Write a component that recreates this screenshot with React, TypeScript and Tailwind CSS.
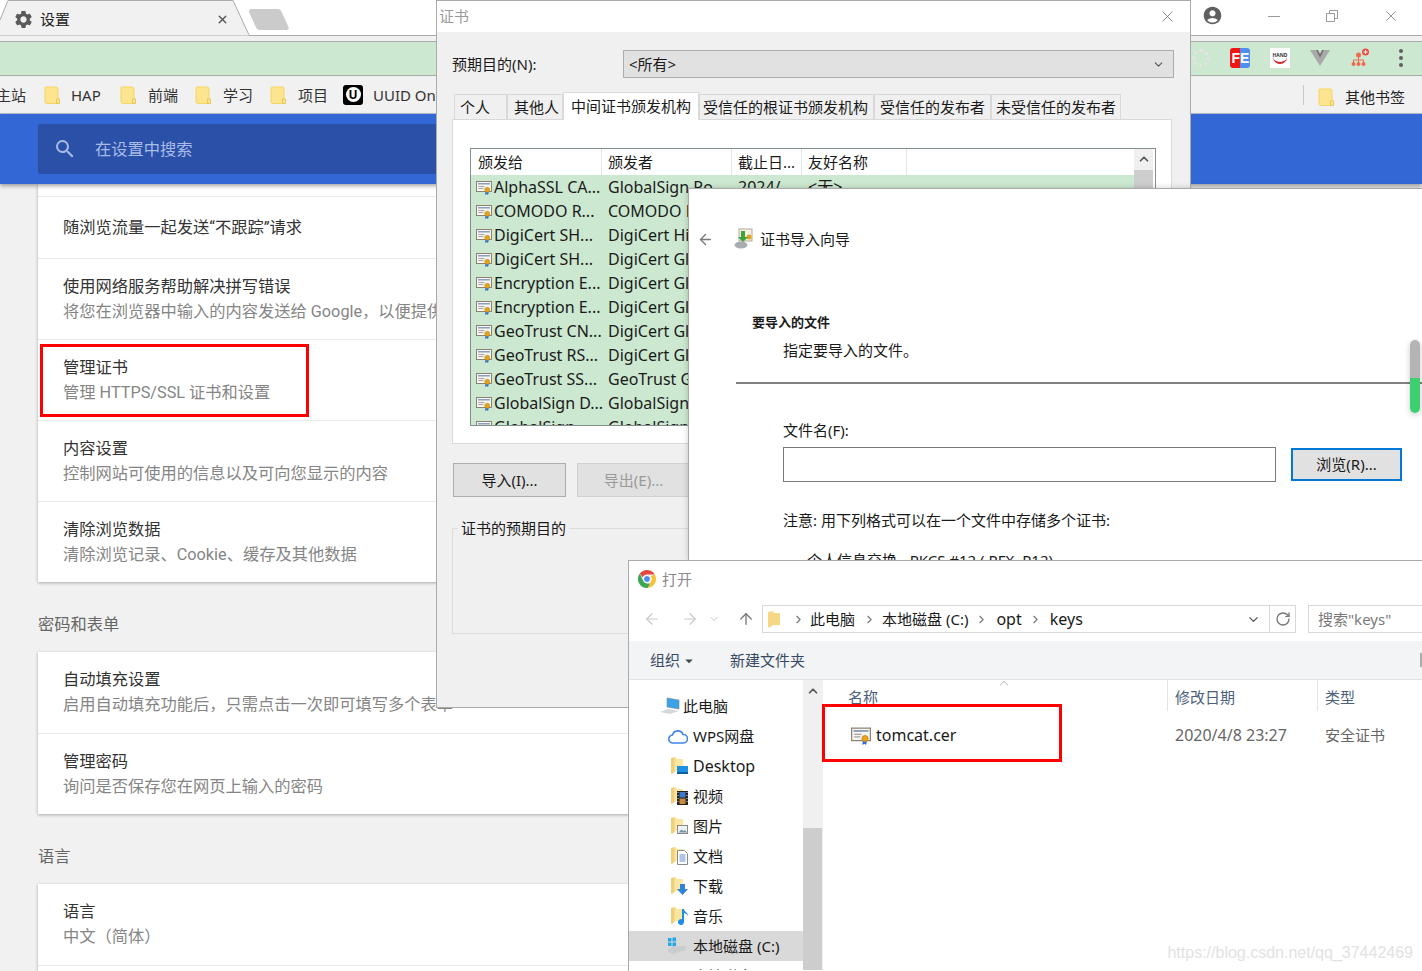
import React from "react";
import { MdSettings, MdSearch, MdAccountCircle, MdArrowDropDown } from "react-icons/md";
import { ArrowLeft, ArrowRight, ArrowUp, ChevronDown, ChevronRight, ChevronUp, RotateCw, X } from "lucide-react";

const Folder = ({ className = "" }: { className?: string }) => (
  <svg width="16" height="18" viewBox="0 0 16 18" className={className}>
    <path d="M1.500 1h11l1.500 1v13h1v2.500H2.500L1 16.500V1.500z" fill="#fde58f" stroke="#f4d565" strokeWidth="1" />
    <rect x="12.500" y="13" width="3" height="4.500" fill="#fde58f" stroke="#e7c14f" strokeWidth="0.800" />
  </svg>
);

const Cert = ({ size = 16 }: { size?: number }) => (
  <svg width={size} height={size} viewBox="0 0 16 16" className="shrink-0">
    <rect x="0.500" y="2.500" width="15" height="10" fill="#f7f5f0" stroke="#8d8375" />
    <rect x="2" y="4" width="12" height="1.500" fill="#8ca0c0" />
    <rect x="2.500" y="7" width="6" height="1" fill="#a4a4a4" />
    <rect x="2.500" y="9" width="5" height="1" fill="#a4a4a4" />
    <path d="M9.500 12l-.5 4 1.800-1 1.200 1 1-4z" fill="#2f6fd0" />
    <circle cx="11.200" cy="10.800" r="2.500" fill="#e5a21f" stroke="#b97e10" strokeWidth="0.500" />
  </svg>
);

const Chrome = () => (
  <svg width="18" height="18" viewBox="0 0 18 18">
    <path d="M9 0a9 9 0 0 1 7.800 4.500H9a4.500 4.500 0 0 0-4.300 3L1.900 3.500A9 9 0 0 1 9 0z" fill="#e2483c" />
    <path d="M16.800 4.500A9 9 0 0 1 9.600 18l3.300-6.700A4.500 4.500 0 0 0 12.400 6z" fill="#f6c338" />
    <path d="M9.600 18A9 9 0 0 1 1.900 3.500l3.300 7.300A4.500 4.500 0 0 0 9 13.500h3z" fill="#3ea655" />
    <circle cx="9" cy="9" r="3.500" fill="#4a8cf0" stroke="#fff" strokeWidth="1" />
  </svg>
);

const NavFolder = ({ badge }: { badge?: React.ReactNode }) => (
  <span className="relative inline-block w-[17px] h-[18px] shrink-0">
    <svg width="12" height="17" viewBox="0 0 12 17" className="block">
      <path d="M0 1l5-1 1 2h6v12H5l-4 3-1-1z" fill="#fbe6a2" />
      <path d="M0 1l3.500-.7v14.200l-2.500 2.500-1-1z" fill="#f1cf79" />
    </svg>
    {badge}
  </span>
);

const SettingRow = ({ title, sub, first }: { title: string; sub?: string; first?: boolean }) => (
  <div className={`px-[25px] flex flex-col justify-center ${first ? "" : "border-t border-[#e9e9e9]"} ${first && sub ? "pb-[2px]" : ""} ${sub ? "h-[81px]" : "h-[61px]"}`}>
    <div className="text-[16.250px] leading-[25px] text-[#333] whitespace-nowrap">{title}</div>
    {sub && <div className="text-[16.250px] leading-[25px] text-[#858585] whitespace-nowrap">{sub}</div>}
  </div>
);

const Card = ({ children, className = "" }: { children: React.ReactNode; className?: string }) => (
  <div className={`w-[900px] bg-white shadow-[0_1px_3px_rgba(0,0,0,0.3)] ${className}`}>{children}</div>
);

const SectionLabel = ({ children }: { children: React.ReactNode }) => (
  <div className="h-[70px] flex items-end pb-[17px] text-[16.250px] leading-[20px] text-[#666]">{children}</div>
);

const Bookmark = ({ label, width, gap }: { label: string; width: string; gap: string }) => (
  <div className={`flex items-center shrink-0 ${width}`}>
    <Folder className={gap} />
    <span className="text-[15px] mt-[2px] text-[#333] whitespace-nowrap">{label}</span>
  </div>
);

const certRows = [
  ["AlphaSSL CA...", "GlobalSign Ro"],
  ["COMODO R...", "COMODO RSA"],
  ["DigiCert SH...", "DigiCert Hi"],
  ["DigiCert SH...", "DigiCert Gl"],
  ["Encryption E...", "DigiCert Gl"],
  ["Encryption E...", "DigiCert Gl"],
  ["GeoTrust CN...", "DigiCert Gl"],
  ["GeoTrust RS...", "DigiCert Gl"],
  ["GeoTrust SS...", "GeoTrust G"],
  ["GlobalSign D...", "GlobalSign"],
  ["GlobalSign...", "GlobalSign"],
];

const tabs: [string, string][] = [
  ["个人", "w-[53px] pl-[5px]"],
  ["其他人", "w-[56px] pl-[6px]"],
];
const tabsAfter: [string, string][] = [
  ["受信任的根证书颁发机构", "w-[175px] pr-[2px]"],
  ["受信任的发布者", "w-[117px]"],
  ["未受信任的发布者", "w-[130px]"],
];

const sideItems: { label: string; icon: React.ReactNode; size: string }[] = [
  { label: "Desktop", size: "text-[16px]", icon: <NavFolder badge={<span className="absolute right-0 bottom-[1px] w-[11px] h-[8px] bg-[#1e90e0] border-b-2 border-[#0f5f9f]" />} /> },
  {
    label: "视频",
    size: "text-[15px]",
    icon: (
      <NavFolder
        badge={
          <svg width="11" height="14" viewBox="0 0 11 14" className="absolute right-0 bottom-0">
            <rect width="11" height="14" fill="#222" />
            <rect x="2.500" y="1" width="6" height="5.500" fill="#3f78c9" />
            <rect x="2.500" y="7.500" width="6" height="5.500" fill="#c98a3f" />
            <path d="M1 1v1M1 4v1M1 7v1M1 10v1M10 1v1M10 4v1M10 7v1M10 10v1" stroke="#ddd" />
          </svg>
        }
      />
    ),
  },
  {
    label: "图片",
    size: "text-[15px]",
    icon: (
      <NavFolder
        badge={
          <svg width="11" height="9" viewBox="0 0 11 9" className="absolute right-0 bottom-[1px]">
            <rect x=".5" y=".5" width="10" height="8" fill="#eef3f7" stroke="#8a8a8a" />
            <path d="M1.500 7.500l3-3 2 1.500 1.500-1 2 2.500z" fill="#6f95a8" />
          </svg>
        }
      />
    ),
  },
  {
    label: "文档",
    size: "text-[15px]",
    icon: (
      <NavFolder
        badge={
          <svg width="11" height="15" viewBox="0 0 11 15" className="absolute right-0 bottom-0">
            <path d="M.5.5h7l3 3v11H.5z" fill="#fff" stroke="#8a8a8a" />
            <path d="M2.500 5h6M2.500 7h6M2.500 9h6M2.500 11h6" stroke="#5a8fc8" />
          </svg>
        }
      />
    ),
  },
  { label: "下载", size: "text-[15px]", icon: <NavFolder badge={<svg width="11" height="11" viewBox="0 0 11 11" className="absolute right-0 bottom-0"><path d="M3 0h5v5h3L5.500 11 0 5h3z" fill="#2f83d8" /></svg>} /> },
  { label: "音乐", size: "text-[15px]", icon: <NavFolder badge={<svg width="11" height="16" viewBox="0 0 11 16" className="absolute right-0 bottom-0"><path d="M5 0h2c0 3 4 3 4 7-1-2-2-2.500-4-3v9a3 3 0 1 1-2-2.800z" fill="#1e8fe0" /></svg>} /> },
];

export default function App() {
  return (
    <div className="relative w-[1422px] h-[971px] overflow-hidden bg-[#f1f1f1] font-['Noto_Sans','Noto_Sans_CJK_SC',sans-serif] text-[#1a1a1a]">
      {/* browser chrome */}
      <div className="relative h-[36px] bg-white border-b border-[#aaaaaa]">
        <svg width="300" height="36" viewBox="0 0 300 36" className="absolute left-0 top-0">
          <path d="M0 20L8 .5H233L249 35.500H0z" fill="#f1f1f1" />
          <path d="M0 20L8 .5H233L249 35" fill="none" stroke="#aaaaaa" />
          <path d="M251 9h27a4 4 0 0 1 3.500 2.500l7 15.500c.5 1.500 0 3-2 3h-27a4 4 0 0 1-3.500-2.500L249 12c-.5-1.500.5-3 2-3z" fill="#cbcbcb" />
        </svg>
        <div className="relative flex items-center h-[36px] pl-[13px]">
          <MdSettings size={21} className="text-[#5a5a5a] mt-[2px]" />
          <span className="ml-[6px] text-[15px] mt-[2px] text-[#222]">设置</span>
          <X size={13} strokeWidth={2.500} className="ml-[146px] text-[#555] mt-[2px]" />
        </div>
      </div>
      <div className="h-[6px] bg-[#f1f1f1] border-b border-[#aaaaaa]" />
      <div className="h-[34px] bg-[#cde8d0] border-b border-[#aaaaaa]" />
      <div className="relative h-[38px] bg-[#f1f1f1] border-b border-[#b9bfcc] flex items-center overflow-hidden">
        <span className="text-[15px] mt-[2px] text-[#333] w-[44px] -ml-[4px] shrink-0 whitespace-nowrap">主站</span>
        <div className="ml-[4px] flex items-center">
          <Bookmark label="HAP" width="w-[76px]" gap="mr-[11px]" />
          <Bookmark label="前端" width="w-[75px]" gap="mr-[12px]" />
          <Bookmark label="学习" width="w-[75px]" gap="mr-[12px]" />
          <Bookmark label="项目" width="w-[73px]" gap="mr-[12px]" />
          <div className="flex items-center">
            <span className="w-[20px] h-[20px] bg-black rounded-[3px] flex items-center justify-center mr-[10px]">
              <span className="w-[15px] h-[15px] rounded-full bg-white flex items-center justify-center text-[12px] leading-none font-bold text-black">U</span>
            </span>
            <span className="text-[15px] mt-[2px] text-[#333] whitespace-nowrap">UUID Online</span>
          </div>
        </div>
      </div>
      <div className="relative z-10 h-[70px] bg-[#3367d6] pl-[38px] pt-[10px] shadow-[0_2px_4px_rgba(0,0,0,0.35)]">
        <div className="w-[640px] h-[50px] rounded-[2px] bg-[#2a50a8] flex items-center pl-[15px]">
          <MdSearch size={24} className="text-[#a9bce6]" />
          <span className="ml-[18px] text-[16.250px] text-[#a9bce6]">在设置中搜索</span>
        </div>
      </div>

      {/* settings page */}
      <div className="pl-[38px] font-['Roboto','Noto_Sans_CJK_SC',sans-serif]">
        <Card className="pt-[12px]">
          <div className="border-t border-[#e9e9e9]">
            <SettingRow first title="随浏览流量一起发送“不跟踪”请求" />
          </div>
          <SettingRow title="使用网络服务帮助解决拼写错误" sub="将您在浏览器中输入的内容发送给 Google，以便提供更准确的拼写建议" />
          <SettingRow title="管理证书" sub="管理 HTTPS/SSL 证书和设置" />
          <SettingRow title="内容设置" sub="控制网站可使用的信息以及可向您显示的内容" />
          <SettingRow title="清除浏览数据" sub="清除浏览记录、Cookie、缓存及其他数据" />
        </Card>
        <SectionLabel>密码和表单</SectionLabel>
        <Card>
          <SettingRow first title="自动填充设置" sub="启用自动填充功能后，只需点击一次即可填写多个表单" />
          <SettingRow title="管理密码" sub="询问是否保存您在网页上输入的密码" />
        </Card>
        <SectionLabel>语言</SectionLabel>
        <Card>
          <SettingRow first title="语言" sub="中文（简体）" />
          <div className="border-t border-[#e9e9e9] h-[20px]" />
        </Card>
      </div>

      {/* red box on settings */}
      <div className="absolute z-20 left-[40px] top-[344px] w-[269px] h-[73px] border-[3px] border-[#ff0000]" />

      {/* window-right chrome icons */}
      <div className="absolute left-[1191px] top-0 w-[231px] h-[35px] bg-white flex items-center">
        <MdAccountCircle size={21} className="ml-[11px] -mt-[5px] text-[#5f5f5f]" />
        <span className="ml-[45px] w-[12px] h-px bg-[#9a9a9a] -mt-[3px]" />
        <svg width="12" height="12" viewBox="0 0 12 12" className="ml-[46px] -mt-[3px]">
          <path d="M.5 3.500h8v8h-8zM3.500 3.500V.5h8v8h-3" fill="none" stroke="#9a9a9a" />
        </svg>
        <X size={18} strokeWidth={1} className="ml-[44px] -mt-[3px] text-[#707070]" />
      </div>
      <div className="absolute left-[1191px] top-[48px] w-[231px] h-[20px] flex items-center">
        <span className="w-[18px] h-[18px] ml-[1px] rounded-full border-[3px] border-dotted border-[#e4e4e4]" />
        <span className="ml-[20px] w-[20px] h-[20px] rounded-[3px] overflow-hidden flex text-white font-bold text-[14px] leading-[20px] font-['Liberation_Sans',sans-serif]">
          <span className="w-[10px] bg-[#f01414] text-right">F</span>
          <span className="w-[10px] bg-[#4f8fee]">E</span>
        </span>
        <span className="ml-[20px] w-[20px] h-[20px] bg-white flex items-center justify-center relative overflow-hidden">
          <span className="text-[5px] font-bold text-[#333] relative z-10 -mt-[4px]">HAND</span>
          <span className="absolute left-[3px] top-[7px] w-[14px] h-[9px] rounded-b-full border-b-2 border-[#d42020]" />
        </span>
        <svg width="20" height="18" viewBox="0 0 20 18" className="ml-[20px]">
          <path d="M0 1h6l4 8 4-8h6L10 17z" fill="#a8a8a8" />
          <path d="M6 1l4 8 4-8h-2l-2 4-2-4z" fill="#6f6f6f" />
        </svg>
        <svg width="20" height="20" viewBox="0 0 20 20" className="ml-[20px]">
          <circle cx="15.500" cy="4" r="3.500" fill="#ef4a3c" />
          <path d="M13.500 4h4M15.500 2v4" stroke="#fff" />
          <circle cx="8.500" cy="7" r="2.500" fill="#ef6a50" />
          <path d="M8.500 9v3M3.500 15v-3h10v3M8.500 12v3" fill="none" stroke="#ef6a50" />
          <circle cx="3.500" cy="16" r="2" fill="#ef6a50" />
          <circle cx="8.500" cy="16" r="2" fill="#ef6a50" />
          <circle cx="13.500" cy="16" r="2" fill="#ef6a50" />
        </svg>
        <span className="ml-[29px] flex flex-col gap-[3px]">
          <span className="w-[4px] h-[4px] rounded-full bg-[#5f5f5f]" />
          <span className="w-[4px] h-[4px] rounded-full bg-[#5f5f5f]" />
          <span className="w-[4px] h-[4px] rounded-full bg-[#5f5f5f]" />
        </span>
      </div>
      <div className="absolute left-[1303px] top-[85px] w-px h-[20px] bg-[#c8c8c8]" />
      <div className="absolute left-[1318px] top-[85px] flex items-center">
        <Folder className="mr-[11px]" />
        <span className="text-[15px] mt-[1px] text-[#222] whitespace-nowrap">其他书签</span>
      </div>

      {/* certificate window */}
      <div className="absolute z-30 left-[436px] top-0 w-[755px] h-[708px] bg-[#f0f0f0] border border-[#aaaaaa] overflow-hidden">
        <div className="h-[31px] bg-white flex items-center justify-between pl-[2px] pr-[13px]">
          <span className="text-[15px] text-[#9a9a9a]">证书</span>
          <X size={19} strokeWidth={1} className="text-[#6f6f6f]" />
        </div>
        <div className="flex items-center mt-[18px] pl-[15px] h-[28px]">
          <span className="w-[171px] text-[15px] mt-px text-[#1a1a1a]">预期目的(N):</span>
          <div className="w-[551px] h-[28px] bg-[#e1e1e1] border border-[#adadad] flex items-center justify-between pl-[5px] pr-[8px]">
            <span className="text-[15px] mt-px text-[#1a1a1a]">&lt;所有&gt;</span>
            <ChevronDown size={13} className="text-[#555]" />
          </div>
        </div>
        {/* tabs */}
        <div className="flex items-end ml-[17px] mt-[13px] h-[28px] relative z-10">
          {tabs.map(([t, w]) => (
            <div key={t} className={`${w} h-[25px] bg-[#f0f0f0] border border-[#d9d9d9] border-b-0 flex items-center text-[15px] text-[#1a1a1a]`}>{t}</div>
          ))}
          <div className="w-[136px] h-[28px] bg-white border border-[#d9d9d9] border-b-0 -mb-px flex items-center justify-center text-[15px] text-[#1a1a1a]">中间证书颁发机构</div>
          {tabsAfter.map(([t, w]) => (
            <div key={t} className={`${w} h-[25px] bg-[#f0f0f0] border border-[#d9d9d9] border-b-0 flex items-center justify-center text-[15px] text-[#1a1a1a] whitespace-nowrap`}>{t}</div>
          ))}
        </div>
        <div className="ml-[15px] w-[720px] h-[325px] bg-white border border-[#d9d9d9] pt-[28px] pl-[17px]">
          <div className="w-[686px] h-[278px] border border-[#82908a] bg-white flex overflow-hidden">
            <div className="flex-1 min-w-0">
              <div className="h-[26px] flex text-[15px] text-[#1a1a1a] leading-[26px]">
                <div className="w-[131px] pl-[7px] border-r border-[#e5e5e5]">颁发给</div>
                <div className="w-[130px] pl-[6px] border-r border-[#e5e5e5]">颁发者</div>
                <div className="w-[70px] pl-[6px] border-r border-[#e5e5e5]">截止日...</div>
                <div className="w-[105px] pl-[6px] border-r border-[#e5e5e5]">友好名称</div>
              </div>
              <div className="bg-[#cde8d0] h-[251px] overflow-hidden">
                {certRows.map(([a, b], i) => (
                  <div key={i} className="h-[24px] flex items-center text-[16px] text-[#1a1a1a] whitespace-nowrap">
                    <div className="w-[137px] flex items-center pl-[5px] gap-[2px]">
                      <Cert />
                      <span>{a}</span>
                    </div>
                    <div className="w-[130px] overflow-hidden">{b}</div>
                    <div className="w-[70px]">2024/...</div>
                    <div>&lt;无&gt;</div>
                  </div>
                ))}
              </div>
            </div>
            <div className="w-[19px] mr-[2px] bg-[#f0f0f0] flex flex-col items-center">
              <ChevronUp size={14} strokeWidth={3} className="mt-[3px] text-[#555]" />
              <div className="mt-[4px] w-full h-[60px] bg-[#cdcdcd]" />
            </div>
          </div>
        </div>
        <div className="flex mt-[19px] ml-[16px] gap-[11px]">
          <div className="w-[113px] h-[34px] bg-[#e1e1e1] border border-[#adadad] flex items-center justify-center text-[15px] text-[#1a1a1a]">导入(I)...</div>
          <div className="w-[113px] h-[34px] bg-[#e1e1e1] border border-[#d0d0d0] flex items-center justify-center text-[15px] text-[#9a9a9a]">导出(E)...</div>
        </div>
        <div className="relative ml-[15px] mt-[31px] w-[720px] h-[106px] border border-[#dcdcdc]">
          <span className="absolute left-[5px] -top-[11px] px-[3px] bg-[#f0f0f0] text-[15px] leading-[20px] text-[#1a1a1a]">证书的预期目的</span>
        </div>
      </div>

      {/* import wizard */}
      <div className="absolute z-40 left-[688px] top-[188px] w-[734px] h-[372px] bg-white border-t border-l border-[#aaaaaa] overflow-hidden shadow-[0_0_6px_rgba(0,0,0,0.2)]">
        <div className="flex items-center mt-[37px] pl-[8px] h-[26px]">
          <ArrowLeft size={17} strokeWidth={2} className="text-[#7a7a7a]" />
          <svg width="20" height="22" viewBox="0 0 20 22" className="ml-[20px]">
            <rect x="5" y="1" width="13" height="12" fill="#f6efe2" stroke="#b5ab98" />
            <circle cx="15" cy="9" r="2.500" fill="#e5a21f" />
            <path d="M7 3v6H4l5 5 5-5h-3V3z" fill="#3aa53a" />
            <ellipse cx="7" cy="17" rx="6.500" ry="3.500" fill="#a9adb2" />
          </svg>
          <span className="ml-[6px] text-[15px] text-[#1a1a1a]">证书导入向导</span>
        </div>
        <div className="mt-[60px] pl-[63px] text-[13px] font-bold leading-[20px] text-[#1a1a1a]">要导入的文件</div>
        <div className="mt-[8px] pl-[94px] text-[15px] leading-[20px] text-[#1a1a1a]">指定要导入的文件。</div>
        <div className="mt-[22px] ml-[47px] h-[2px] bg-[#808080]" />
        <div className="mt-[36px] pl-[94px] text-[15px] leading-[20px] text-[#1a1a1a]">文件名(F):</div>
        <div className="mt-[7px] ml-[94px] flex items-center">
          <div className="w-[493px] h-[35px] border border-[#7a7a7a] bg-white" />
          <div className="ml-[15px] w-[111px] h-[33px] bg-[#e1e1e1] border-2 border-[#0078d7] flex items-center justify-center text-[15px] text-[#1a1a1a]">浏览(R)...</div>
        </div>
        <div className="mt-[28px] pl-[94px] text-[15px] leading-[20px] text-[#1a1a1a]">注意: 用下列格式可以在一个文件中存储多个证书:</div>
        <div className="mt-[20px] pl-[118px] text-[15px] leading-[20px] text-[#1a1a1a] whitespace-nowrap">个人信息交换 - PKCS #12 (.PFX,.P12)</div>
        <div className="absolute right-[2px] top-[151px] w-[10px] h-[73px] rounded-full overflow-hidden flex flex-col shadow-[0_2px_6px_rgba(0,0,0,0.2)]">
          <div className="h-[38px] bg-[#b4b4b4]" />
          <div className="flex-1 bg-[#3cd070]" />
        </div>
      </div>

      {/* open dialog */}
      <div className="absolute z-50 left-[628px] top-[560px] w-[794px] h-[411px] bg-white border-t border-l border-[#aaaaaa] overflow-hidden">
        <div className="flex items-center h-[36px] pl-[9px]">
          <Chrome />
          <span className="ml-[6px] text-[15px] text-[#8a8a8a]">打开</span>
        </div>
        <div className="flex items-center h-[28px] mt-[8px] pl-[14px]">
          <ArrowLeft size={18} strokeWidth={1.500} className="text-[#c8c8c8]" />
          <ArrowRight size={18} strokeWidth={1.500} className="ml-[20px] text-[#c8c8c8]" />
          <ChevronDown size={12} className="ml-[9px] text-[#c8c8c8]" />
          <ArrowUp size={18} strokeWidth={1.800} className="ml-[17px] text-[#7a7a7a]" />
          <div className="ml-[7px] w-[508px] h-[28px] border border-[#d9d9d9] flex items-center text-[15px] text-[#1a1a1a] whitespace-nowrap">
            <svg width="12" height="17" viewBox="0 0 12 17" className="ml-[5px]"><path d="M0 1l5-1 1 2h6v12H5l-4 3-1-1z" fill="#f6d785" /></svg>
            <ChevronRight size={13} className="ml-[12px] text-[#777]" />
            <span className="ml-[5px]">此电脑</span>
            <ChevronRight size={13} className="ml-[8px] text-[#777]" />
            <span className="ml-[6px]">本地磁盘 (C:)</span>
            <ChevronRight size={13} className="ml-[7px] text-[#777]" />
            <span className="ml-[8px] text-[16px]">opt</span>
            <ChevronRight size={13} className="ml-[7px] text-[#777]" />
            <span className="ml-[8px] text-[16px]">keys</span>
            <ChevronDown size={15} className="ml-auto mr-[8px] text-[#555]" />
          </div>
          <div className="w-[26px] h-[28px] border border-l-0 border-[#d9d9d9] flex items-center justify-center">
            <RotateCw size={16} className="text-[#777]" />
          </div>
          <div className="ml-[12px] flex-1 h-[28px] border border-r-0 border-[#d9d9d9] pl-[9px] text-[15px] leading-[26px] text-[#7a7a7a] whitespace-nowrap">搜索"keys"</div>
        </div>
        <div className="relative mt-[8px] h-[39px] bg-[#f3f4f6] border-b border-[#e3e3e3] flex items-center pl-[21px] pt-px text-[15px] text-[#374a63]">
          <span>组织</span>
          <MdArrowDropDown size={18} className="text-[#444]" />
          <span className="ml-[32px]">新建文件夹</span>
          <span className="absolute right-0 top-[12px] w-[2px] h-[14px] bg-[#aaa]" />
        </div>
        <div className="flex h-[290px]">
          {/* sidebar */}
          <div className="w-[174px] shrink-0 pt-[11px] text-[15px] text-[#1a1a1a] overflow-hidden">
            <div className="h-[30px] flex items-center pl-[30px]">
              <svg width="22" height="18" viewBox="0 0 22 18" className="shrink-0">
                <path d="M8 1l12 2v9l-12-2z" fill="#3aa3e8" stroke="#7a8a96" strokeWidth="0.600" />
                <path d="M1 15l8-3 11 2-9 3z" fill="#d5d8db" />
              </svg>
              <span className="ml-[2px]">此电脑</span>
            </div>
            <div className="h-[30px] flex items-center pl-[39px]">
              <svg width="20" height="15" viewBox="0 0 20 15" className="shrink-0">
                <path d="M5 14a4 4 0 0 1-.5-8 5.500 5.500 0 0 1 10.500-.5 4 4 0 0 1 .5 8.500z" fill="#fff" stroke="#3f86e8" strokeWidth="1.600" />
              </svg>
              <span className="ml-[5px]">WPS网盘</span>
            </div>
            {sideItems.map((it) => (
              <div key={it.label} className="h-[30px] flex items-center pl-[42px]">
                {it.icon}
                <span className={`ml-[5px] ${it.size}`}>{it.label}</span>
              </div>
            ))}
            <div className="h-[30px] flex items-center pl-[38px] bg-[#d9d9d9]">
              <svg width="20" height="18" viewBox="0 0 20 18" className="shrink-0">
                <path d="M1 1h3.500v3.500H1zM5.500 .5H9v4H5.500zM1 5.500h3.500V9H1zM5.500 5.500H9v4H5.500z" fill="#20a8e8" />
                <path d="M1 12l6-3h11l1 4-13 4-5-2z" fill="#c9cdd0" />
              </svg>
              <span className="ml-[6px]">本地磁盘 (C:)</span>
            </div>
            <div className="h-[30px] flex items-center pl-[64px]">本地磁盘 (D:)</div>
          </div>
          {/* scrollbar */}
          <div className="w-[19px] shrink-0 bg-[#f0f0f0] flex flex-col items-center">
            <ChevronUp size={14} strokeWidth={3} className="mt-[4px] text-[#555]" />
            <div className="mt-[130px] w-full flex-1 bg-[#cdcdcd]" />
          </div>
          {/* file list */}
          <div className="flex-1 min-w-0 border-l border-[#f0f0f0] relative">
            <div className="flex h-[31px] text-[15px] text-[#4c607a]">
              <div className="w-[344px] pl-[25px] pt-[7px] leading-[20px]">名称</div>
              <div className="w-[150px] pl-[7px] pt-[7px] leading-[20px] border-l border-[#e3e3e3]">修改日期</div>
              <div className="flex-1 pl-[7px] pt-[7px] leading-[20px] border-l border-[#e3e3e3]">类型</div>
            </div>
            <ChevronUp size={14} strokeWidth={1} className="absolute left-[174px] -top-[4px] text-[#777]" />
            <div className="flex items-center h-[30px] mt-[9px]">
              <div className="w-[344px] pl-[28px] flex items-center text-[16px] text-[#1a1a1a]">
                <Cert size={20} />
                <span className="ml-[5px]">tomcat.cer</span>
              </div>
              <div className="w-[150px] pl-[8px] text-[16px] text-[#666] whitespace-nowrap">2020/4/8 23:27</div>
              <div className="flex-1 pl-[8px] text-[15px] text-[#666]">安全证书</div>
            </div>
          </div>
        </div>
      </div>

      {/* red box on file */}
      <div className="absolute z-[60] left-[822px] top-[704px] w-[240px] h-[58px] border-[3px] border-[#ff0000]" />

      {/* watermark */}
      <div className="absolute z-[60] right-[9px] top-[942px] text-[16px] leading-[22px] text-[#e2e2e2] font-['Liberation_Sans',sans-serif]">https://blog.csdn.net/qq_37442469</div>
    </div>
  );
}
